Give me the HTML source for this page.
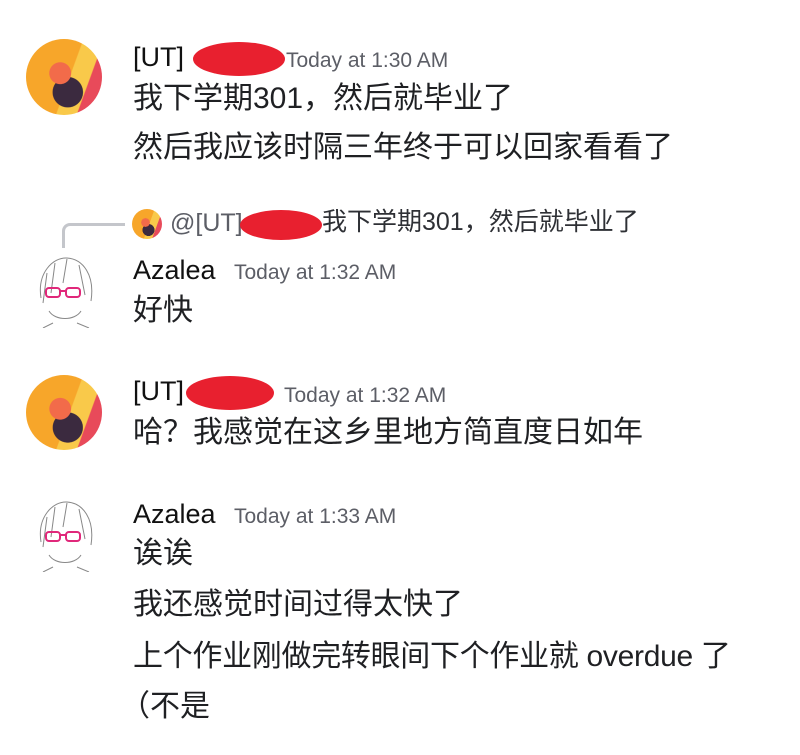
<!DOCTYPE html>
<html><head><meta charset="utf-8"><style>
body{margin:0;width:800px;height:755px;background:#fff;position:relative;overflow:hidden;font-family:"Liberation Sans","Noto Sans CJK SC",sans-serif;color:#1f2023}
.t{position:absolute;white-space:nowrap;line-height:1}
.m{font-size:30px}
.n{font-size:27px;color:#111}
.ts{font-size:21px;color:#5c5e66}
.av{position:absolute;border-radius:50%;overflow:hidden}
.ut{background:radial-gradient(circle at 45% 45%,#f26b4a 0 18%,transparent 19%),radial-gradient(circle at 55% 70%,#3b2a3f 0 22%,transparent 23%),linear-gradient(110deg,#f7a62a 0 55%,#f9c94a 56% 75%,#e84a5a 76%)}
.red{position:absolute;background:#e8202f;border-radius:50%}
</style></head><body>
<div class="av ut" style="left:26px;top:39px;width:76px;height:76px"></div>
<div class="t n" style="left:133px;top:44px">[UT]</div>
<div class="red" style="left:193px;top:42px;width:92px;height:34px"></div>
<div class="t ts" style="left:286px;top:50px">Today at 1:30 AM</div>
<div class="t m" style="left:133px;top:84px">我下学期301，然后就毕业了</div>
<div class="t m" style="left:133px;top:133px">然后我应该时隔三年终于可以回家看看了</div>

<div style="position:absolute;left:62px;top:223px;width:60px;height:22px;border-left:3px solid #c4c6cb;border-top:3px solid #c4c6cb;border-top-left-radius:8px"></div>
<div class="av ut" style="left:132px;top:209px;width:30px;height:30px"></div>
<div class="t" style="left:170px;top:211px;font-size:25px;color:#5c5e66">@[UT]</div>
<div class="red" style="left:240px;top:210px;width:82px;height:30px"></div>
<div class="t" style="left:322px;top:210px;font-size:25px;color:#2e3035">我下学期301，然后就毕业了</div>

<svg style="position:absolute;left:33px;top:253px" width="64" height="75" viewBox="0 0 64 75" fill="none" stroke="#888" stroke-width="1">
<path d="M8 45 C4 20 20 4 34 5 C50 6 62 22 58 48 M14 20 L10 50 M22 10 L18 40 M46 12 L52 42 M34 6 L30 30 M16 58 C22 68 42 68 48 58 M20 70 L10 75 M44 70 L56 75"/>
<g stroke="#e0287a" stroke-width="2"><rect x="13" y="35" width="14" height="9" rx="3"/><rect x="33" y="35" width="14" height="9" rx="3"/><path d="M27 38 H33"/></g>
</svg>
<div class="t n" style="left:133px;top:257px">Azalea</div>
<div class="t ts" style="left:234px;top:262px">Today at 1:32 AM</div>
<div class="t m" style="left:133px;top:296px">好快</div>

<div class="av ut" style="left:26px;top:375px;width:76px;height:75px"></div>
<div class="t n" style="left:133px;top:378px">[UT]</div>
<div class="red" style="left:186px;top:376px;width:88px;height:34px"></div>
<div class="t ts" style="left:284px;top:385px">Today at 1:32 AM</div>
<div class="t m" style="left:133px;top:418px">哈？我感觉在这乡里地方简直度日如年</div>

<svg style="position:absolute;left:33px;top:497px" width="64" height="75" viewBox="0 0 64 75" fill="none" stroke="#888" stroke-width="1">
<path d="M8 45 C4 20 20 4 34 5 C50 6 62 22 58 48 M14 20 L10 50 M22 10 L18 40 M46 12 L52 42 M34 6 L30 30 M16 58 C22 68 42 68 48 58 M20 70 L10 75 M44 70 L56 75"/>
<g stroke="#e0287a" stroke-width="2"><rect x="13" y="35" width="14" height="9" rx="3"/><rect x="33" y="35" width="14" height="9" rx="3"/><path d="M27 38 H33"/></g>
</svg>
<div class="t n" style="left:133px;top:501px">Azalea</div>
<div class="t ts" style="left:234px;top:506px">Today at 1:33 AM</div>
<div class="t m" style="left:133px;top:539px">诶诶</div>
<div class="t m" style="left:133px;top:590px">我还感觉时间过得太快了</div>
<div class="t m" style="left:133px;top:642px;letter-spacing:-0.3px">上个作业刚做完转眼间下个作业就 overdue 了</div>
<div class="t m" style="left:120px;top:688px;font-family:'Noto Sans CJK SC',sans-serif">（不是</div>
</body></html>
